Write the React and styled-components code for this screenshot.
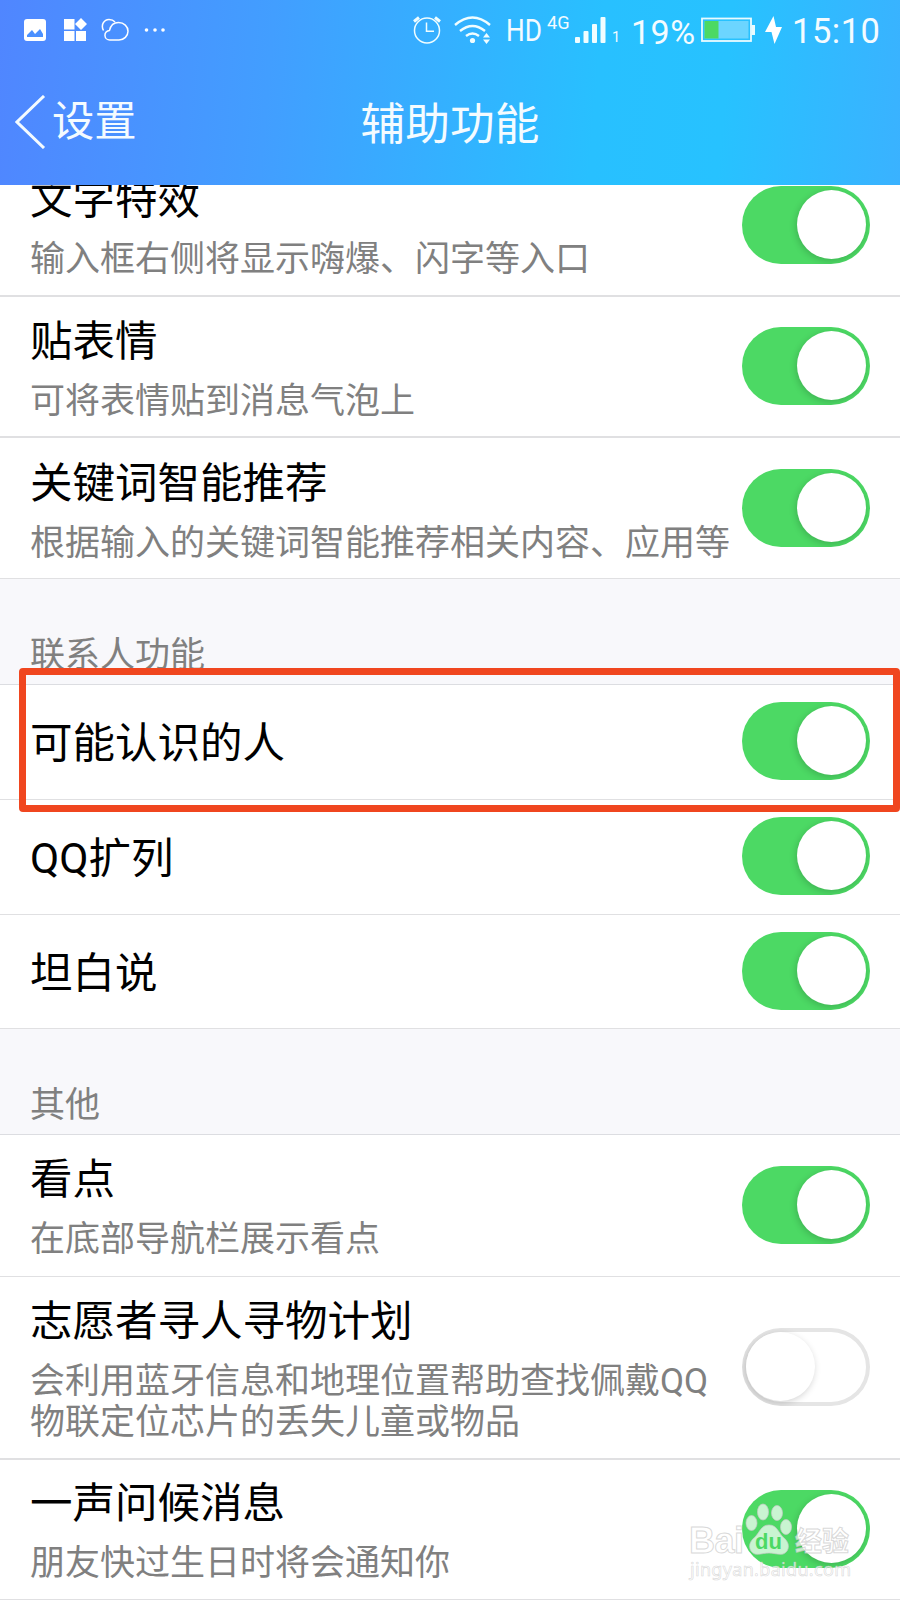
import React from 'react'
import styled, { createGlobalStyle } from "styled-components"

const GlobalStyle = createGlobalStyle`
  * {
    box-sizing: border-box;
  }

  body {
    margin: 0;
    background-color: #ffffff;
    font-family: Roboto, "Noto Sans CJK SC", sans-serif;
  }
`

const Screen = styled.div`
  position: relative;
  display: flex;
  flex-direction: column;
  width: 900px;
  height: 1600px;
  overflow: hidden;
  background-color: #ffffff;
`

const Header = styled.header`
  flex: none;
  height: 185px;
  color: #f4fbff;
  background-image: linear-gradient(95deg, #5086ff 0%, #429eff 30%, #28c0ff 66%, #27c2ff 80%, #3ab2ff 100%);
`

const StatusBar = styled.div`
  display: flex;
  justify-content: space-between;
  height: 60px;
  padding: 0 21px 0 23px;
`

const StatusGroup = styled.div`
  display: flex;
  align-items: center;
`

const StatusIcon = styled.svg`
  flex: none;
  display: block;
  margin-left: ${props => props.$gap || 0}px;
`

const StatusText = styled.span`
  width: ${props => props.$width}px;
  margin-left: ${props => props.$gap || 0}px;
  margin-top: ${props => props.$drop || 0}px;
  font-size: ${props => props.$size}px;
  line-height: 1;
  letter-spacing: ${props => props.$spacing || 0}px;
  white-space: nowrap;
  transform: scaleX(${props => props.$stretch || 1});
  transform-origin: left;
`

const NavBar = styled.div`
  display: grid;
  grid-template-columns: 1fr auto 1fr;
  align-items: center;
  height: 125px;
  padding: 0 15px;
`

const BackButton = styled.div`
  display: flex;
  align-items: center;
  gap: 6px;
  padding-bottom: 1px;
  font-size: 42.3px;
  line-height: 60px;
`

const PageTitle = styled.div`
  padding-top: 4px;
  font-size: 44.7px;
  line-height: 60px;
`

const Content = styled.main`
  flex: 1;
  overflow: hidden;
`

// the list is scrolled a little, so the first row is cut by the header
const List = styled.div`
  margin-top: -31px;
`

const Row = styled.div`
  display: flex;
  align-items: center;
  justify-content: space-between;
  height: ${props => props.$height}px;
  padding: 0 30px;
  border-bottom: ${props => props.$line || 1}px solid #e0e0e2;
`

const RowText = styled.div`
  flex: none;
  padding-top: ${props => props.$drop}px;
`

const RowTitle = styled.div`
  color: #000000;
  font-size: 42.5px;
  line-height: 62px;
`

const RowDescription = styled.div`
  padding-bottom: 2px;
  color: #808080;
  font-size: 35px;
  line-height: 41px;
  margin-top: 8px;
  white-space: pre-line;
`

const SectionTitle = styled.div`
  display: flex;
  align-items: flex-end;
  height: ${props => props.$height}px;
  padding: 0 30px 6px;
  border-bottom: 1px solid #dcdde1;
  color: #808080;
  background-color: #f8f8fb;
  font-size: 35px;
  line-height: 44px;
`

const Track = styled.div`
  flex: none;
  display: flex;
  justify-content: ${props => props.$on ? 'flex-end' : 'flex-start'};
  width: 128px;
  height: 78px;
  margin-top: ${props => props.$shift}px;
  padding: 4px;
  border-radius: 39px;
  overflow: hidden;
  background-color: ${props => props.$on ? '#4cd964' : '#ffffff'};
  box-shadow: ${props => props.$on ? 'none' : 'inset 0 0 0 4px #e5e5e5'};
`

const Knob = styled.div`
  width: 69px;
  height: 69px;
  border-radius: 50%;
  background-color: #ffffff;
  box-shadow: -1px 2px 7px rgba(0, 0, 0, 0.18);
`

const Highlight = styled.div`
  position: absolute;
  top: 668px;
  left: 19px;
  width: 881px;
  height: 144px;
  border: 7px solid #f0461f;
  border-radius: 4px;
`

const Watermark = styled.svg`
  position: absolute;
  top: 1490px;
  left: 680px;
`

const StatusLeft = () => {
    return (
        <StatusGroup>
            <StatusIcon width="24" height="24" viewBox="0 0 24 24">
                <rect x="1" y="1" width="22" height="22" rx="3" fill="#fff"/>
                <path d="M4 19v-2l5-5 3 4 5-5 3 5v3z" fill="#4b90ff"/>
            </StatusIcon>
            <StatusIcon $gap={16} width="25" height="24" viewBox="0 0 25 24" fill="#fff">
                <path d="M1 1h10.500v10.500H1zM1 13h10.500v10H1zM13 13h10v10H13zM18 0l6 6-6 6-6-6z"/>
            </StatusIcon>
            <StatusIcon $gap={13} width="30" height="24" viewBox="0 0 30 24" fill="none" stroke="#fff" strokeWidth="1.500">
                <path d="M9 22a4.800 4.800 0 0 1-.5-9.600C9.500 8 12 4.500 17.500 4.500c5.500 0 9.500 4 9.500 8.700S23 22 18 22z"/>
                <path d="M2.500 12.500C-.5 7 3 1.500 8 1.500c3 0 4.500.8 6 2.500"/>
            </StatusIcon>
            <StatusIcon $gap={13} width="24" height="24" viewBox="0 0 24 24" fill="#fff">
                <circle cx="2.500" cy="12" r="1.800"/>
                <circle cx="11" cy="12" r="1.800"/>
                <circle cx="19" cy="12" r="1.800"/>
            </StatusIcon>
        </StatusGroup>
    );
};

const StatusRight = () => {
    return (
        <StatusGroup>
            <StatusIcon width="30" height="30" viewBox="0 0 30 30" fill="none" stroke="#f0fdff" strokeWidth="1.500">
                <circle cx="15" cy="15.500" r="12.500"/>
                <path d="M14.500 7.500v8.700H22"/>
                <path d="M2 6.500l5-4M28 6.500l-5-4" strokeWidth="3"/>
            </StatusIcon>
            <StatusIcon $gap={12} width="38" height="30" viewBox="0 0 38 30" fill="none" stroke="#f0fdff" strokeWidth="2.400">
                <path d="M1 10q17.500-15 35 0M6 16q12.500-10 25 0M12 21q6.500-5 13 0"/>
                <circle cx="18.500" cy="25.500" r="2.600" fill="#f0fdff" stroke="none"/>
                <path d="M29 22.500l3.500-4.500 3.500 4.500zM29 24.500l3.500 4.500 3.500-4.500z" fill="#f0fdff" stroke="none"/>
            </StatusIcon>
            <StatusText $gap={14} $drop={2} $size={30.5} $width={34} $stretch={0.86}>HD</StatusText>
            <StatusText $gap={7} $drop={-13} $size={18.5} $width={22} $stretch={0.98}>4G</StatusText>
            <StatusIcon $gap={6} width="31" height="28" viewBox="0 0 31 28" fill="#f0fdff">
                <rect x="0" y="21" width="5" height="6" rx="1"/>
                <rect x="8.500" y="15" width="5" height="12" rx="1"/>
                <rect x="17" y="8" width="5" height="19" rx="1"/>
                <rect x="25.500" y="1" width="5" height="26" rx="1"/>
            </StatusIcon>
            <StatusText $gap={6} $drop={16} $size={14.5} $width={8}>1</StatusText>
            <StatusText $gap={11} $drop={3} $size={34} $width={64} $spacing={0.5}>19%</StatusText>
            <StatusIcon $gap={6} width="54" height="26" viewBox="0 0 54 26">
                <rect x="1" y="1.500" width="49" height="22.500" fill="none" stroke="#e9fbff" strokeWidth="1.800"/>
                <rect x="3.500" y="4" width="44" height="17.500" fill="#6cd5ff"/>
                <rect x="3.500" y="4" width="14" height="17.500" fill="#4cd964"/>
                <rect x="50.500" y="8" width="3.500" height="10" fill="#e9fbff"/>
            </StatusIcon>
            <StatusIcon $gap={10} width="18" height="28" viewBox="0 0 18 28" fill="#fff">
                <path d="M8.500 0L0 16h6.500l3 12L17 11h-6z"/>
            </StatusIcon>
            <StatusText $gap={9} $drop={3} $size={34.5} $width={87} $spacing={0.5}>15:10</StatusText>
        </StatusGroup>
    );
};

const Switch = ({on, shift}) => {
    return (
        <Track $on={on} $shift={shift}>
            <Knob/>
        </Track>
    );
};

const SettingRow = ({title, description, on = true, height, line, drop, shift = -1}) => {
    return (
        <Row $height={height} $line={line}>
            <RowText $drop={drop ?? (description ? 0 : 4)}>
                <RowTitle>{title}</RowTitle>
                {description && <RowDescription>{description}</RowDescription>}
            </RowText>
            <Switch on={on} shift={shift}/>
        </Row>
    );
};

const BaiduWatermark = () => {
    return (
        <Watermark width="180" height="100" viewBox="0 0 180 100" fill="#fff" fillOpacity="0.7" stroke="#c8c8c8" strokeOpacity="0.7" strokeWidth="1">
            <text x="9" y="63" fontFamily="Liberation Sans" fontSize="36" fontWeight="700" textLength="55">Bai</text>
            <ellipse cx="71.500" cy="33" rx="5.500" ry="7.500"/>
            <ellipse cx="83" cy="22" rx="5.500" ry="8"/>
            <ellipse cx="97" cy="23" rx="5.500" ry="7.500"/>
            <ellipse cx="106" cy="37" rx="5.500" ry="7.500"/>
            <path d="M89 35c8 0 9 7 14 12 5 4 7 9 4 14-4 6-11 2-18 2s-14 4-18-2c-3-5-1-10 4-14 5-5 6-12 14-12z"/>
            <text x="75" y="59" fontFamily="Liberation Sans" fontSize="22" fontWeight="700" fill="#4cd964" fillOpacity="1" stroke="none">du</text>
            <text x="115" y="61" fontFamily="Noto Sans CJK SC" fontSize="27" fontWeight="700">经验</text>
            <text x="10" y="86" fontFamily="Noto Sans" fontSize="18" textLength="161" strokeWidth="0.600">jingyan.baidu.com</text>
        </Watermark>
    );
};

const App = () => {
    return (
        <>
            <GlobalStyle/>
            <Screen>
                <Header>
                    <StatusBar>
                        <StatusLeft/>
                        <StatusRight/>
                    </StatusBar>
                    <NavBar>
                        <BackButton>
                            <svg width="31" height="54" viewBox="0 0 31 54" fill="none" stroke="#f4fbff" strokeWidth="3">
                                <path d="M29 1L2 27l27 26"/>
                            </svg>
                            <span>设置</span>
                        </BackButton>
                        <PageTitle>辅助功能</PageTitle>
                    </NavBar>
                </Header>
                <Content>
                    <List>
                        <SettingRow height={143} line={2} drop={2} shift={0} title="文字特效" description="输入框右侧将显示嗨爆、闪字等入口"/>
                        <SettingRow height={141} line={2} drop={1} title="贴表情" description="可将表情贴到消息气泡上"/>
                        <SettingRow height={141} drop={2} title="关键词智能推荐" description="根据输入的关键词智能推荐相关内容、应用等"/>
                        <SectionTitle $height={106}>联系人功能</SectionTitle>
                        <SettingRow height={115} shift={-2} title="可能认识的人"/>
                        <SettingRow height={115} shift={-2} title="QQ扩列"/>
                        <SettingRow height={114} title="坦白说"/>
                        <SectionTitle $height={106}>其他</SectionTitle>
                        <SettingRow height={142} shift={-2} title="看点" description="在底部导航栏展示看点"/>
                        <SettingRow
                            height={183}
                            line={2}
                            on={false}
                            title="志愿者寻人寻物计划"
                            description={'会利用蓝牙信息和地理位置帮助查找佩戴QQ\n物联定位芯片的丢失儿童或物品'}
                        />
                        <SettingRow height={140} title="一声问候消息" description="朋友快过生日时将会通知你"/>
                    </List>
                </Content>
                <Highlight/>
                <BaiduWatermark/>
            </Screen>
        </>
    );
};

export default App;
